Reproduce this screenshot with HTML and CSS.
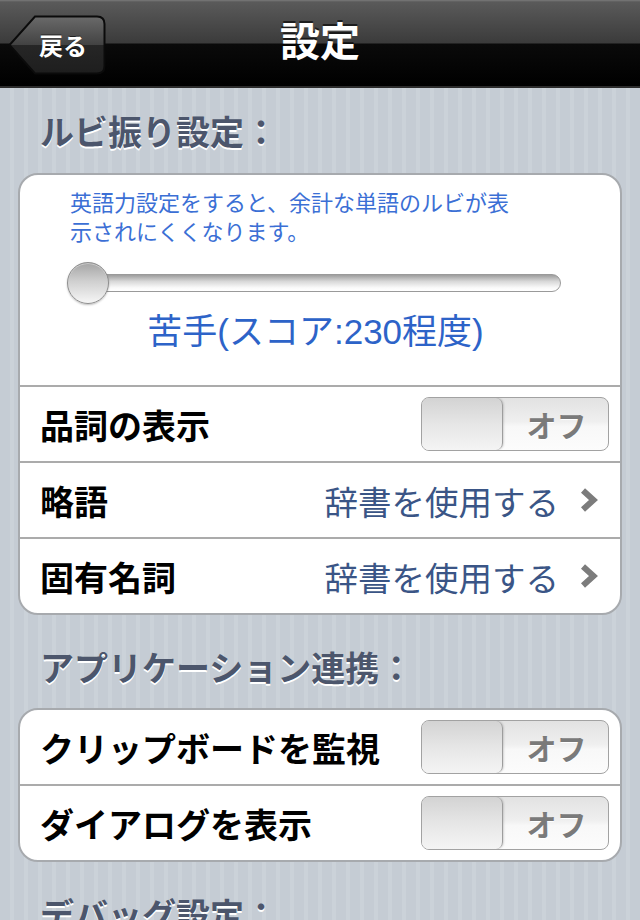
FILE: index.html
```html
<!DOCTYPE html>
<html lang="ja">
<head>
<meta charset="utf-8">
<title>設定</title>
<link rel="stylesheet" href="styles.css">
</head>
<body>
<header class="navbar">
  <a class="back-btn">
    <svg class="back-shape" width="98" height="60" viewBox="0 0 98 60">
      <defs>
        <linearGradient id="bg" x1="0" y1="0" x2="0" y2="1">
          <stop offset="0" stop-color="#6a6a6a"/>
          <stop offset="0.5" stop-color="#424242"/>
          <stop offset="0.5" stop-color="#262626"/>
          <stop offset="1" stop-color="#1e1e1e"/>
        </linearGradient>
      </defs>
      <path d="M27 1.5 L89 1.5 Q96.5 1.5 96.5 9 L96.5 51 Q96.5 58.5 89 58.5 L27 58.5 L1.5 30 Z" fill="url(#bg)" stroke="#0b0b0b" stroke-width="2"/>
    </svg>
    <span class="back-text">戻る</span>
  </a>
  <h1 class="nav-title">設定</h1>
  <span class="nav-spacer"></span>
</header>

<main class="content">
  <h2 class="section-title first">ルビ振り設定：</h2>
  <section class="card">
    <div class="level-box">
      <p class="level-desc">英語力設定をすると、余計な単語のルビが表<br>示されにくくなります。</p>
      <div class="slider">
        <div class="slider-track"></div>
        <div class="slider-thumb"></div>
      </div>
      <p class="level-value">苦手(スコア:230程度)</p>
    </div>
    <div class="row">
      <span class="row-label">品詞の表示</span>
      <div class="switch"><span class="knob"></span><span class="switch-label">オフ</span></div>
    </div>
    <div class="row">
      <span class="row-label">略語</span>
      <span class="row-value">辞書を使用する</span>
      <svg class="chevron" width="18" height="26" viewBox="0 0 18 26"><polyline points="3,3.5 13.5,13 3,22.5" fill="none" stroke="#7c7c7c" stroke-width="6"/></svg>
    </div>
    <div class="row">
      <span class="row-label">固有名詞</span>
      <span class="row-value">辞書を使用する</span>
      <svg class="chevron" width="18" height="26" viewBox="0 0 18 26"><polyline points="3,3.5 13.5,13 3,22.5" fill="none" stroke="#7c7c7c" stroke-width="6"/></svg>
    </div>
  </section>

  <h2 class="section-title">アプリケーション連携：</h2>
  <section class="card">
    <div class="row">
      <span class="row-label">クリップボードを監視</span>
      <div class="switch"><span class="knob"></span><span class="switch-label">オフ</span></div>
    </div>
    <div class="row">
      <span class="row-label">ダイアログを表示</span>
      <div class="switch"><span class="knob"></span><span class="switch-label">オフ</span></div>
    </div>
  </section>

  <h2 class="section-title">デバッグ設定：</h2>
</main>
</body>
</html>
```

FILE: styles.css
```css
* { box-sizing: border-box; }

html, body {
  margin: 0;
  padding: 0;
}

body {
  width: 640px;
  min-height: 920px;
  overflow: hidden;
  font-family: "Liberation Sans", "Noto Sans CJK JP", sans-serif;
  background-color: #c5ccd4;
  background-image: repeating-linear-gradient(90deg, #c5ccd4 0 10px, #cbd2d9 10px 14px);
}

/* ---------- navigation bar ---------- */
.navbar {
  height: 88px;
  display: grid;
  grid-template-columns: 1fr auto 1fr;
  align-items: center;
  background: linear-gradient(#7a7a7a 0, #5a5a5a 2px, #3b3b3b 43px, #0a0a0a 44px, #000 86px, #2c2c2c 86px, #2c2c2c 88px);
}

.back-btn {
  position: relative;
  justify-self: start;
  margin-left: 8px;
  margin-top: 1px;
  width: 98px;
  height: 60px;
  display: flex;
  align-items: center;
  justify-content: center;
  padding-left: 12px;
}

.back-shape {
  position: absolute;
  left: 0;
  top: 0;
}

.back-text {
  position: relative;
  color: #fff;
  font-size: 24px;
  font-weight: bold;
  text-shadow: 0 -1px 0 rgba(0,0,0,0.6);
}

.nav-title {
  margin: 0 0 4px;
  color: #fff;
  font-size: 40px;
  font-weight: bold;
  text-shadow: 0 -2px 0 rgba(0,0,0,0.6);
  line-height: 1;
}

/* ---------- content ---------- */
.content {
  padding: 0 18px;
}

.section-title {
  margin: 34px 0 19px;
  padding-left: 22px;
  height: 40px;
  line-height: 40px;
  font-size: 34px;
  font-weight: bold;
  color: #4c566c;
  text-shadow: 0 2px 0 #fff;
}

.section-title.first {
  margin-top: 25px;
  margin-bottom: 20px;
}

.card {
  background: #fff;
  border: 2px solid #a7aaae;
  border-radius: 20px;
  overflow: hidden;
}

.level-box {
  padding: 14px 59px 33px 50px;
}

.level-desc {
  margin: 0;
  font-size: 22px;
  line-height: 29px;
  color: #3b6fd5;
  white-space: nowrap;
}

.slider {
  position: relative;
  margin: 14px 0 0 -3px;
  height: 44px;
  display: flex;
  align-items: center;
}

.slider-track {
  flex: 1;
  height: 18px;
  margin-left: 10px;
  border-radius: 9px;
  border: 1px solid #9a9a9a;
  background: linear-gradient(#9d9d9d, #d8d8d8 40%, #fafafa 80%, #ffffff);
}

.slider-thumb {
  position: absolute;
  left: 0;
  top: 1px;
  width: 42px;
  height: 42px;
  border-radius: 50%;
  border: 1px solid #8e8e8e;
  background: linear-gradient(#a5a5a5, #cfcfcf 45%, #efefef 90%, #f5f5f5);
  box-shadow: 0 1px 2px rgba(0,0,0,0.25), inset 0 1px 0 rgba(255,255,255,0.4);
}

.level-value {
  margin: 7px -20px 0 -20px;
  text-align: center;
  font-size: 35px;
  line-height: 40px;
  color: #2d63c8;
  white-space: nowrap;
}

.row {
  height: 76px;
  border-top: 2px solid #ababab;
  display: flex;
  align-items: center;
  padding: 0 11px 0 20px;
}

.card > .row:first-child {
  border-top: none;
  height: 74px;
}

.row-label {
  flex: 1;
  font-size: 34px;
  font-weight: bold;
  color: #000;
  white-space: nowrap;
}

.row-value {
  font-size: 33.5px;
  color: #3a5586;
  margin-right: 21px;
  white-space: nowrap;
}

.chevron {
  margin-right: 11px;
}

/* ---------- switch ---------- */
.switch {
  width: 188px;
  height: 54px;
  flex: none;
  display: flex;
  border: 1px solid #a2a2a2;
  border-radius: 8px;
  overflow: hidden;
  background: linear-gradient(#e2e2e2, #efefef 45%, #f8f8f8 55%, #fcfcfc);
}

.knob {
  width: 81px;
  border-right: 1px solid #9d9d9d;
  border-radius: 0 7px 7px 0;
  background: linear-gradient(#d3d3d3, #e6e6e6 50%, #f4f4f4);
  box-shadow: 1px 0 2px rgba(0,0,0,0.15);
}

.switch-label {
  flex: 1;
  display: flex;
  align-items: center;
  justify-content: center;
  font-size: 30px;
  font-weight: bold;
  color: #7a7a7a;
  text-shadow: 0 1px 0 #fff;
  padding-left: 2px;
}
```
